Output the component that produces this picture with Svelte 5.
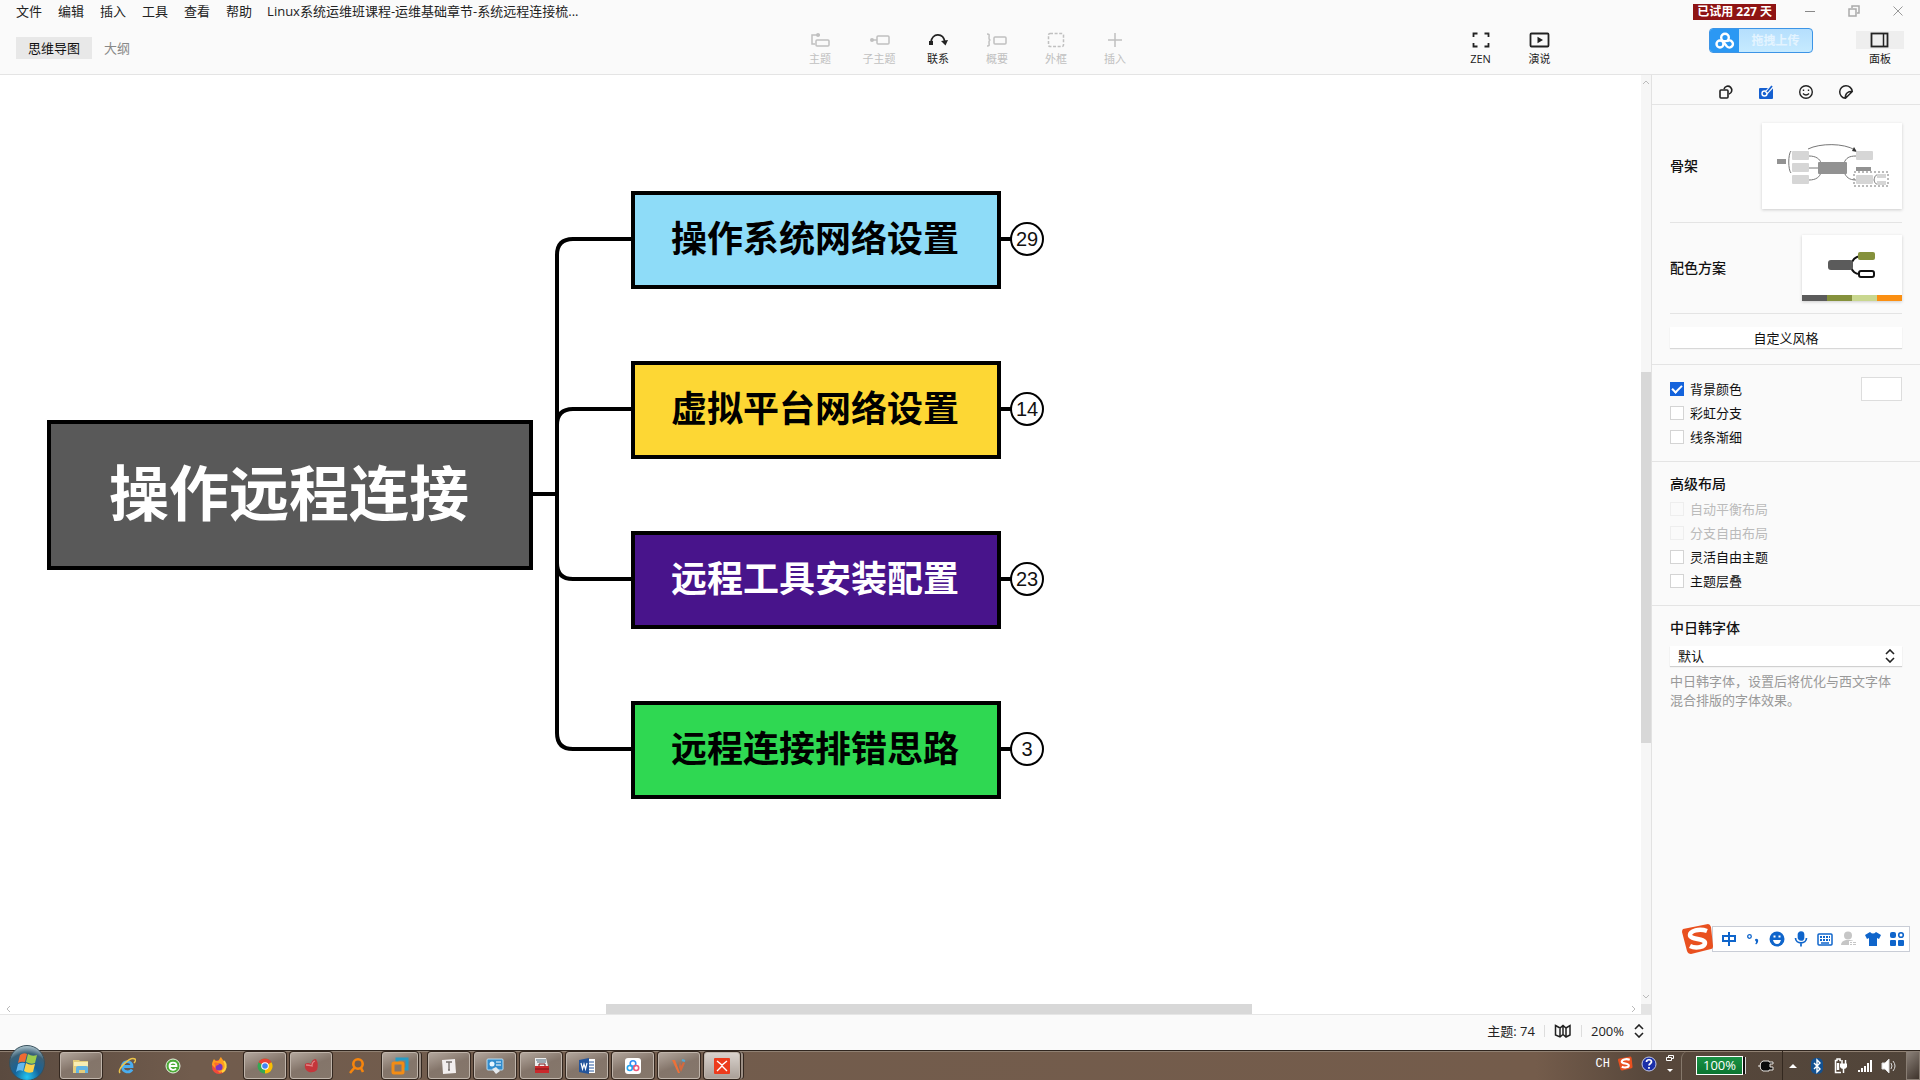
<script>
  const menus = ['文件', '编辑', '插入', '工具', '查看', '帮助'];
  const tools = [
    { id: 'topic', label: '主题' },
    { id: 'sub', label: '子主题' },
    { id: 'link', label: '联系', active: true },
    { id: 'summary', label: '概要' },
    { id: 'frame', label: '外框' },
    { id: 'plus', label: '插入' }
  ];
  const branches = [
    { text: '操作系统网络设置', count: 29, kind: 'sky' },
    { text: '虚拟平台网络设置', count: 14, kind: 'gold' },
    { text: '远程工具安装配置', count: 23, kind: 'violet' },
    { text: '远程连接排错思路', count: 3, kind: 'green' }
  ];
  const styleOptions = [
    { label: '背景颜色', checked: true },
    { label: '彩虹分支' },
    { label: '线条渐细' }
  ];
  const layoutOptions = [
    { label: '自动平衡布局', disabled: true },
    { label: '分支自由布局', disabled: true },
    { label: '灵活自由主题' },
    { label: '主题层叠' }
  ];
  const tasks = [
    { id: 'folder', name: '资源管理器', open: true },
    { id: 'ie', name: 'Internet Explorer' },
    { id: 'greene', name: '浏览器' },
    { id: 'firefox', name: 'Firefox' },
    { id: 'chrome', name: 'Chrome', open: true },
    { id: 'redball', name: '远程', open: true },
    { id: 'search', name: '搜索' },
    { id: 'vmware', name: 'VMware', open: true, stack: true },
    { id: 'typora', name: 'Typora', open: true },
    { id: 'control', name: '控制面板', open: true },
    { id: 'toolbox', name: '工具箱', open: true },
    { id: 'word', name: 'Word', open: true },
    { id: 'netdisk', name: '网盘', open: true },
    { id: 'vlogo', name: 'V', open: true },
    { id: 'xmind', name: 'XMind', open: true, stack: true, current: true }
  ];
</script>

{#snippet toolIcon(id)}
  <svg width="22" height="18" viewBox="0 0 22 18" fill="none" stroke="currentColor" stroke-width="1.5">
    {#if id === 'topic'}
      <path d="M6 13H3V4H8" /><circle cx="9" cy="4" r="2" fill="currentColor" stroke="none" /><path d="M8 4h3" />
      <rect x="7" y="9" width="13" height="6" rx="1" />
    {:else if id === 'sub'}
      <circle cx="4" cy="9" r="2" fill="currentColor" stroke="none" /><path d="M4 9h5" />
      <rect x="9" y="5" width="12" height="8" rx="1" />
    {:else if id === 'link'}
      <path d="M4 11C5 2 16 1 18 11" stroke-width="1.8" />
      <rect x="2" y="10" width="4" height="4" fill="currentColor" stroke="none" />
      <path d="M14 10l7-1-2.500 5.500z" fill="currentColor" stroke="none" />
    {:else if id === 'summary'}
      <path d="M1 3c3 0 2 1 2 4q0 2 1.500 2Q3 9 3 11c0 3 1 4-2 4" />
      <rect x="8" y="6" width="12" height="7" rx="1" />
    {:else if id === 'frame'}
      <rect x="3.500" y="2.500" width="15" height="13" rx="1.500" stroke-dasharray="3 1.600" />
    {:else if id === 'plus'}
      <path d="M11 2v14M4 9h14" />
    {:else if id === 'zen'}
      <path d="M3.500 6V2.500H7.500M14.500 2.500h4V6M18.500 12v3.500h-4M7.500 15.500h-4V12" stroke-width="1.800" />
    {:else if id === 'play'}
      <rect x="1.500" y="2.500" width="18" height="13" rx="1" stroke-width="1.800" />
      <path d="M8.500 5.800l5.500 3.200-5.500 3.200z" fill="currentColor" stroke="none" />
    {:else if id === 'panel'}
      <rect x="2.500" y="2.500" width="16" height="13" stroke-width="1.800" /><path d="M14.500 2.500v13" />
    {/if}
  </svg>
{/snippet}

{#snippet stepper()}
  <svg class="stepper" width="10" height="14" viewBox="0 0 10 14" fill="none" stroke="#222" stroke-width="1.6"><path d="M1 5l4-4 4 4M1 9l4 4 4-4" /></svg>
{/snippet}

{#snippet option(o)}
  <label class="opt" class:off={o.disabled}>
    <input type="checkbox" checked={o.checked} disabled={o.disabled} />
    <span>{o.label}</span>
  </label>
{/snippet}

{#snippet sogou(size)}
  <svg width={size} height={size} viewBox="0 0 32 32">
    <path d="M1 6L26 1q2 0 3 3l2 19q0 3-2 3L9 31q-3 0-4-3L0 9q0-2 1-3z" fill="#e9501f" />
    <path d="M25 8C17 5 8 8 8 12c0 5 15 3 15 8 0 4-9 6-15 3" fill="none" stroke="#fff" stroke-width="4.500" />
  </svg>
{/snippet}

{#snippet taskIcon(id)}
  <svg width="18" height="18" viewBox="0 0 18 18">
    {#if id === 'folder'}
      <path d="M1 3h6l1 1h8v12H1z" fill="#e3cd7c" /><path d="M2 5h14v4H2z" fill="#f8edb3" />
      <path d="M4 16v-5q0-2 2-2h8q2 0 2 2v5h-3v-3H7v3z" fill="#62b5e4" />
    {:else if id === 'ie'}
      <path d="M14 12.500C12 16 4.500 16 4.500 9.500 4.500 3 14 3 14 9.500H5" fill="none" stroke="#49adf0" stroke-width="2.800" />
      <path d="M2 16C-1 12 12-1 17 2c1 1 0 3-1 4" fill="none" stroke="#edc64a" stroke-width="1.500" />
    {:else if id === 'greene'}
      <circle cx="9" cy="9" r="7" fill="#4cab37" stroke="#e9f5e4" />
      <path d="M12 11.500c-2 2.500-6.500 1.500-6.500-2.500 0-4.500 7-4.500 7 0H6" fill="none" stroke="#fff" stroke-width="1.800" />
    {:else if id === 'firefox'}
      <circle cx="9" cy="10" r="7" fill="#f3493b" /><path d="M2 8c0-3 1-4 2-6 1 2 4 3 5 1 1-2 1-2 2-3 1 3 6 5 5 10-1 3-3 5-6 6" fill="#ff9d1e" />
      <circle cx="9" cy="10" r="3.600" fill="#7b35c1" /><path d="M4 6c3-1 4 0 5 2-3 0-3 1-3 3z" fill="#ff6b2c" />
      <path d="M14 4c3 4 2 9-2 11" fill="none" stroke="#ffd43c" stroke-width="2" />
    {:else if id === 'chrome'}
      <circle cx="9" cy="9" r="7.500" fill="#35a853" /><path d="M9 9L2.500 5.200A7.500 7.500 0 0 1 15.500 5.200z" fill="#e94235" />
      <path d="M9 9l6.500-3.800A7.500 7.500 0 0 1 9 16.500z" fill="#fbbc05" />
      <circle cx="9" cy="9" r="3.800" fill="#fff" /><circle cx="9" cy="9" r="2.800" fill="#4285f4" />
    {:else if id === 'redball'}
      <path d="M3 7q3-2 6 0 1-5 5-5 3 5 1 11-3 3-8 2-5-2-4-8z" fill="#c5363b" /><path d="M4 8q3 0 6 1 0-4 3-5" fill="none" stroke="#e28484" stroke-width="1.300" />
    {:else if id === 'search'}
      <circle cx="10" cy="7" r="4.700" fill="none" stroke="#f7850c" stroke-width="2.600" /><path d="M7 10l-5 6M13 11l2 4" stroke="#f7850c" stroke-width="2.600" />
    {:else if id === 'vmware'}
      <path d="M6 6V2h10v10h-3" fill="none" stroke="#279bc5" stroke-width="3" /><rect x="2" y="6" width="10" height="10" rx="1" fill="none" stroke="#f28c15" stroke-width="3" />
    {:else if id === 'typora'}
      <path d="M2 3l13-1 1 14-13 1z" fill="#f2eeee" /><path d="M6 5h6M9 5v8M8 13h2" stroke="#77706d" stroke-width="1.400" />
    {:else if id === 'control'}
      <rect x="1" y="2" width="16" height="11" rx="1" fill="#318ccd" stroke="#b8def4" /><circle cx="6" cy="7" r="2.500" fill="#e6f5ff" /><path d="M10 5h5M10 8h5" stroke="#fff" /><path d="M6 12l4-2 4 4-4 3z" fill="#e4e9ed" />
    {:else if id === 'toolbox'}
      <path d="M3 1h11l2 8H3z" fill="#eee" /><path d="M4 3h10M5 5h9" stroke="#4b6577" /><path d="M3 9h14v7H3z" fill="#c9292c" /><path d="M7 9V7h6v2M3 12h14" fill="none" stroke="#761619" />
    {:else if id === 'word'}
      <path d="M9 2h8v14H9z" fill="#fff" /><path d="M10 5h6M10 8h6M10 11h6M10 14h6" stroke="#2858a0" /><path d="M1 3l10-2v16L1 15z" fill="#24559c" /><path d="M3 6l1.500 6L6 7l1.500 5L9 6" fill="none" stroke="#fff" stroke-width="1.200" />
    {:else if id === 'netdisk'}
      <rect x="1" y="1" width="16" height="16" rx="3" fill="#fff" /><g fill="none" stroke-width="1.600"><circle cx="9" cy="6.500" r="2.800" stroke="#2f8df4" /><circle cx="5.800" cy="11" r="2.500" stroke="#26a5ef" /><circle cx="12.200" cy="11" r="2.500" stroke="#ed5879" /></g>
    {:else if id === 'vlogo'}
      <path d="M2 3h3l5 13H8z" fill="#ed7139" /><path d="M10 4l-1 6 2 5 4-9-2-1-2 4z" fill="#d26a40" /><path d="M12 3l3 1" stroke="#4ca9d8" stroke-width="2" />
    {:else if id === 'xmind'}
      <rect x="1" y="1" width="16" height="16" rx="1" fill="#ed3b1b" /><path d="M4 4l5 4 5-4M4 14l5-5 5 5" fill="none" stroke="#fff" stroke-width="1.400" />
    {/if}
  </svg>
{/snippet}

<div class="screen">
  <header>
    <div class="titlebar">
      <nav aria-label="菜单">
        {#each menus as m}<button class="menu">{m}</button>{/each}
      </nav>
      <span class="title">Linux系统运维班课程-运维基础章节-系统远程连接梳...</span>
      <span class="trial">已试用 227 天</span>
      <div class="win">
        <button aria-label="最小化"><svg width="12" height="12" stroke="#888" fill="none"><path d="M1 6.500h10" /></svg></button>
        <button aria-label="还原"><svg width="12" height="12" stroke="#aaa" fill="none" stroke-width="1.5"><rect x="1" y="4" width="7" height="7" /><path d="M4 3V1h7v7H9" /></svg></button>
        <button aria-label="关闭"><svg width="12" height="12" stroke="#999" fill="none"><path d="M1.500 1.500l9 9M10.500 1.500l-9 9" /></svg></button>
      </div>
    </div>
    <div class="toolbar">
      <div class="views">
        <button class="view on">思维导图</button>
        <button class="view">大纲</button>
      </div>
      <div class="tools">
        {#each tools as t}
          <button class="tool" class:dim={!t.active} disabled={!t.active}>{@render toolIcon(t.id)}<span>{t.label}</span></button>
        {/each}
      </div>
      <div class="actions">
        <button class="tool">{@render toolIcon('zen')}<span>ZEN</span></button>
        <button class="tool">{@render toolIcon('play')}<span>演说</span></button>
        <button class="upload">
          <span class="cloud"><svg width="20" height="18" viewBox="0 0 20 18" fill="none" stroke="#fff" stroke-width="2.400"><circle cx="10" cy="5.500" r="3.800" /><circle cx="5" cy="12" r="3.500" /><path d="M12 9.500a3.500 3.500 0 1 1 0 5L8 9.500" /></svg></span>
          <span class="uptext">拖拽上传</span>
        </button>
        <button class="tool panelbtn"><span class="pad">{@render toolIcon('panel')}</span><span>面板</span></button>
      </div>
    </div>
  </header>

  <div class="body">
    <div class="work">
      <div class="editor">
        <main class="canvas">
          <svg class="wires" width="1040" height="760" fill="none" stroke="#000" stroke-width="4">
            <path d="M533 419H557" />
            <path d="M631 164H573Q557 164 557 180V658Q557 674 573 674H631" />
            <path d="M631 334H573Q557 334 557 350M631 504H573Q557 504 557 488" />
            <path d="M1001 164h11M1001 334h11M1001 504h11M1001 674h11" />
          </svg>
          <div class="root">操作远程连接</div>
          <div class="branches">
            {#each branches as b}
              <div class="branch">
                <div class="node {b.kind}">{b.text}</div>
                <button class="count">{b.count}</button>
              </div>
            {/each}
          </div>
        </main>
        <div class="vbar">
          <svg width="10" height="10" fill="none" stroke="#bbb"><path d="M2 7l3-3 3 3" /></svg>
          <div class="vtrack"><i></i></div>
          <svg width="10" height="10" fill="none" stroke="#bbb"><path d="M2 3l3 3 3-3" /></svg>
        </div>
      </div>
      <div class="hbar">
        <svg width="16" height="10" fill="none" stroke="#bbb"><path d="M10 2L7 5l3 3" /></svg>
        <div class="htrack"><i></i></div>
        <svg width="16" height="10" fill="none" stroke="#bbb"><path d="M7 2l3 3-3 3" /></svg>
        <b></b>
      </div>
      <footer class="status">
        <span>主题: 74</span><hr />
        <button aria-label="导航图"><svg width="18" height="14" viewBox="0 0 18 14" fill="none" stroke="#222" stroke-width="1.500"><path d="M1.500 1.500L6 4l3-2.500L12 4l4-2.500V11l-4 2-3-2.500L6 13l-4.500-2zM6 4v9M12 4v9M9 1.500V10" /></svg></button><hr />
        <button class="zoom">200% {@render stepper()}</button>
      </footer>
    </div>

    <aside>
      <div class="ptabs">
        <button aria-label="样式"><svg width="16" height="16" viewBox="0 0 16 16" fill="none" stroke="#222" stroke-width="1.600"><rect x="2" y="6" width="8" height="8" rx="1" /><path d="M6 5a4 4 0 1 1 5 5" /></svg></button>
        <button aria-label="画布"><svg width="16" height="16" viewBox="0 0 16 16"><rect x="1" y="4" width="14" height="11" rx="1" fill="#1660d0" /><circle cx="6.500" cy="9.500" r="2.500" fill="none" stroke="#fff" stroke-width="1.400" /><path d="M8 9l6.500-7" stroke="#fafafa" stroke-width="4" /><path d="M9 8l5-6" stroke="#1660d0" stroke-width="1.800" /></svg></button>
        <button aria-label="标记"><svg width="16" height="16" viewBox="0 0 16 16" fill="none" stroke="#222" stroke-width="1.400"><circle cx="8" cy="8" r="6.300" /><path d="M5 9.500q3 3 6 0M5.500 5.500v1.500M10.500 5.500v1.500" /></svg></button>
        <button aria-label="贴纸"><svg width="16" height="16" viewBox="0 0 16 16" fill="none" stroke="#222" stroke-width="1.500"><path d="M14.300 7.500A6.300 6.300 0 1 0 7.500 14.300zM14.300 7.500C11 7 6.500 9 7.500 14.300" /></svg></button>
      </div>
      <section class="themes">
        <div class="row">
          <h3>骨架</h3>
          <button class="thumb skeleton" aria-label="选择骨架">
            <svg width="140" height="86" viewBox="0 0 140 86" fill="none" stroke="#777">
              <path d="M46 26C58 20 82 20 93 27M47 33c7 0 11 3 12 7M47 45h10M47 57c7 0 11-3 12-8M94 33c-7 0-10 2-12 7M94 57c-7 0-10-3-12-8M29 28c-3 3-3 19 0 22M112 57c1-5 2-5 4-5M112 57c1 4 2 4 4 4" />
              <path d="M92 24l3 5-5-1z" fill="#333" stroke="none" />
              <g fill="#d6d6d6" stroke="none"><rect x="30" y="28" width="17" height="9" rx="1" /><rect x="30" y="40" width="17" height="9" rx="1" /><rect x="30" y="52" width="17" height="9" rx="1" /><rect x="94" y="28" width="17" height="9" rx="1" /><rect x="94" y="52" width="17" height="9" rx="1" /><rect x="115" y="51" width="9" height="4" /><rect x="115" y="58" width="9" height="4" /></g>
              <g fill="#929292" stroke="none"><rect x="56" y="39" width="29" height="12" rx="1" /><rect x="15" y="36" width="9" height="5" /><rect x="94" y="44" width="15" height="4" /></g>
              <rect x="92" y="49" width="34" height="14" stroke-dasharray="2 2" />
            </svg>
          </button>
        </div>
        <div class="row second">
          <h3>配色方案</h3>
          <button class="thumb palette" aria-label="选择配色方案">
            <svg width="100" height="60" viewBox="0 0 100 60" fill="none" stroke="#111" stroke-width="2"><path d="M48 31c3-7 5-9 10-10M48 31c3 6 5 8 10 8" /><rect x="26" y="25" width="25" height="10" rx="3" fill="#5b5b5b" stroke="none" /><rect x="56" y="17" width="17" height="8" rx="2" fill="#85913c" stroke="none" /><rect x="57" y="36" width="15" height="6" rx="2" fill="#fff" /></svg>
            <span class="bars"><i class="c1"></i><i class="c2"></i><i class="c3"></i><i class="c4"></i></span>
          </button>
        </div>
        <button class="custom">自定义风格</button>
      </section>
      <section class="opts">
        <div class="list">{#each styleOptions as o}{@render option(o)}{/each}</div>
        <input class="swatch" type="color" value="#ffffff" aria-label="背景颜色值" />
      </section>
      <section class="layout">
        <h3>高级布局</h3>
        <div class="list">{#each layoutOptions as o}{@render option(o)}{/each}</div>
      </section>
      <section class="fonts">
        <h3><label for="cjk">中日韩字体</label></h3>
        <div class="select"><select id="cjk"><option>默认</option></select>{@render stepper()}</div>
        <p>中日韩字体，设置后将优化与西文字体混合排版的字体效果。</p>
      </section>
    </aside>
  </div>

  <div class="taskbar">
    <button class="start" aria-label="开始">
      <svg width="38" height="36" viewBox="0 0 38 36">
        <defs><radialGradient id="orb" cx=".5" cy=".9" r=".9"><stop offset="0" stop-color="#24c6f2" /><stop offset=".4" stop-color="#15639a" /><stop offset=".75" stop-color="#3a6076" /><stop offset="1" stop-color="#b4cbd4" /></radialGradient></defs>
        <circle cx="19" cy="18" r="17.500" fill="url(#orb)" stroke="#38505c" />
        <path d="M12 10q4-3 7-1l-2 8q-4-1-7 1z" fill="#ef6a32" /><path d="M20 9q4 3 9 1l-2 8q-4 2-9-1z" fill="#9ccc4d" /><path d="M10 19q4-2 7-1l-2 8q-4-2-7 1z" fill="#64b7ed" /><path d="M18 18q4 3 9 1l-2 8q-5 2-9-1z" fill="#fbd24c" />
      </svg>
    </button>
    <div class="tasks">
      {#each tasks as t}
        <button class="task" class:open={t.open} class:stack={t.stack} class:current={t.current} aria-label={t.name}><span>{@render taskIcon(t.id)}</span></button>
      {/each}
    </div>
    <div class="lang">
      <span class="ch">CH</span>
      {@render sogou(15)}
      <svg width="16" height="16" viewBox="0 0 16 16"><circle cx="8" cy="8" r="7" fill="#1a2fa8" stroke="#c2c8e8" /><path d="M5.500 6c0-3 5-3 5 0 0 1.500-2.500 1.500-2.500 3.500M8 11v1.800" fill="none" stroke="#fff" stroke-width="1.700" /></svg>
      <svg width="10" height="20" viewBox="0 0 10 20" fill="none" stroke="#fff"><path d="M1.500 3.500h5v3h-5zM3.500 3V1.500h5v3H7" /><path d="M2 15h6l-3 3z" fill="#fff" stroke="none" /></svg>
    </div>
    <div class="power">
      <span class="battery">100%</span>
      <svg width="18" height="14" viewBox="0 0 18 14"><path d="M6 2h6v1h4v2h-3v3h3v3h-4v1H6Q3 11 3 7t3-5zM1 7h3" fill="#0a0a0a" stroke="#e8e4e0" /></svg>
    </div>
    <div class="tray">
      <svg width="16" height="18" viewBox="0 0 16 18"><path d="M4 11h8L8 7z" fill="#fff" /></svg>
      <svg width="16" height="18" viewBox="0 0 16 18"><rect x="2" y="1" width="12" height="16" rx="5" fill="#145190" /><path d="M5 6l6 6-3 3V3l3 3-6 6" fill="none" stroke="#fff" stroke-width="1.400" /></svg>
      <svg width="16" height="18" viewBox="0 0 16 18" fill="none" stroke="#fff" stroke-width="1.500"><path d="M8 15.500H2.500v-12H4V2h3v1.500h1" /><path d="M5 6v7" stroke-width="2.500" /><path d="M7 6.500h7V10q-1 2-3.500 2T7 10z" fill="#fff" stroke="none" /><path d="M9 7V3M12.500 7V3M10.500 11v5" /></svg>
      <svg width="16" height="18" viewBox="0 0 16 18" stroke="#fff" stroke-width="2"><path d="M2 15v-2M5 15v-4M8 15V9M11 15V6M14 15V3" /></svg>
      <svg width="16" height="18" viewBox="0 0 16 18" fill="none" stroke="#ddd"><path d="M1 6h3l4-4v14l-4-4H1z" fill="#fff" /><path d="M10 6q2 3 0 6M12 4q4 5 0 10" /></svg>
    </div>
    <button class="desk" aria-label="显示桌面"></button>
  </div>

  <div class="ime">
    <span class="logo">{@render sogou(32)}</span>
    <div class="imebar">
      <svg viewBox="0 0 16 16" fill="none" stroke="#0f65cb" stroke-width="2"><path d="M2 5h12v5H2zM8 1v14" /></svg>
      <svg viewBox="0 0 16 16"><circle cx="4.500" cy="5.500" r="1.800" fill="none" stroke="#0f65cb" stroke-width="1.300" /><path d="M10 8.500q1-1.500 3 0 .8 3-2 5l-.7-1q1.200-1 .7-2-1-.5-1-2z" fill="#0f65cb" /></svg>
      <svg viewBox="0 0 16 16"><circle cx="8" cy="8" r="7.500" fill="#0f65cb" /><path d="M4 9h8q-1 4-4 4T4 9zM4.500 4.500h2v2h-2zM9.500 4.500h2v2h-2z" fill="#fff" /></svg>
      <svg viewBox="0 0 16 16" fill="none" stroke="#0f65cb" stroke-width="1.700"><rect x="5.500" y="1" width="5" height="8" rx="2.500" fill="#0f65cb" /><path d="M2.500 7c0 6.500 11 6.500 11 0M8 12v3.500" /></svg>
      <svg viewBox="0 0 16 16"><rect x="1" y="3" width="14" height="11" rx="1" fill="none" stroke="#0f65cb" stroke-width="1.500" /><path d="M3 6h10M3 9h10" stroke="#0f65cb" stroke-width="2" stroke-dasharray="2 1" /><path d="M4 12h8" stroke="#0f65cb" stroke-width="1.500" /></svg>
      <svg viewBox="0 0 16 16" fill="#c6c6c6"><circle cx="7" cy="4.500" r="4" /><path d="M0 14q0-4 5-5h4q3 0 4 2v3z" /><path d="M8 10h8v5H8z" fill="#fff" /><path d="M9 11h2v1H9zM12 11h3v1h-3zM9 13h2v1H9zM12 13h3v1h-3z" /></svg>
      <svg viewBox="0 0 16 16"><path d="M5 1q3 3 6 0l5 3-2 4-2-1v8H4V7L2 8 0 4z" fill="#0f65cb" /></svg>
      <svg viewBox="0 0 16 16" fill="#0f65cb"><rect x="1" y="1" width="6" height="6" rx="2" /><rect x="1" y="9" width="6" height="6" rx="1" /><rect x="9" y="9" width="6" height="6" rx="1" /><circle cx="12" cy="4" r="2.300" fill="none" stroke="#0f65cb" stroke-width="1.600" /></svg>
    </div>
  </div>
</div>

<style>
  :global(body) { margin: 0; }
  .screen {
    position: relative; display: flex; flex-direction: column; min-height: 100vh; overflow: hidden;
    background: #fafafa; color: #222; font: 13px/18px "Open Sans", "Noto Sans CJK SC", sans-serif;
  }
  .screen *, .screen { box-sizing: border-box; }
  button { font: inherit; color: inherit; background: none; border: 0; padding: 0; margin: 0; }
  svg { display: block; flex: none; }
  h3 { margin: 0; font-size: 14px; line-height: 20px; font-weight: 500; color: #111; }

  header { border-bottom: 1px solid #e4e4e4; }
  .titlebar { display: flex; align-items: center; height: 24px; padding: 0 0 2px 16px; }
  nav { display: flex; gap: 16px; margin-right: 15px; }
  .title { flex: 1; white-space: nowrap; }
  .trial { background: #8f1414; color: #fff; font-weight: 700; font-size: 12px; line-height: 16px; margin-top: 2px; padding: 0 4px; margin-right: 12px; white-space: nowrap; }
  .win { display: flex; }
  .win button { display: flex; justify-content: center; width: 44px; }
  .toolbar { display: grid; grid-template-columns: 1fr auto 1fr; height: 50px; }
  .views { display: flex; gap: 12px; padding: 13px 16px; }
  .view { height: 22px; line-height: 20px; color: #888; white-space: nowrap; }
  .view.on { background: #e8e8e8; color: #111; padding: 0 12px; }
  .tools { display: flex; padding: 7px 0 0 15px; }
  .tool { display: flex; flex-direction: column; align-items: center; width: 59px; font-size: 11px; line-height: 16px; gap: 2px; color: #222; }
  .tool.dim { color: #c0c0c0; }
  .actions { display: flex; justify-content: flex-end; padding: 7px 16px 0 0; align-items: flex-start; }
  .upload { display: flex; width: 104px; height: 25px; margin: -3px 43px 0 140px; border: 1px solid #3c94e6; border-radius: 4px; overflow: hidden; background: linear-gradient(#b5dffd, #c6eaff); }
  .cloud { display: flex; align-items: center; justify-content: center; width: 29px; background: #2b98f3; align-self: stretch; }
  .uptext { flex: 1; line-height: 23px; font-size: 12px; color: #e4f4ff; font-weight: 700; }
  .panelbtn { width: 48px; }
  .pad { display: flex; justify-content: center; width: 48px; background: #eee; }

  .body { flex: 1; display: flex; }
  .work { flex: 1; display: flex; flex-direction: column; min-width: 0; }
  .editor { flex: 1; display: flex; background: #fff; }
  .canvas { position: relative; flex: 1; overflow: hidden; }
  .wires { position: absolute; left: 0; top: 0; }
  .root { position: absolute; left: 47px; top: 345px; width: 486px; height: 150px; border: 4px solid #000; background: #595959; color: #fff; font-size: 60px; font-weight: 700; line-height: 138px; padding-right: 2px; text-align: center; white-space: nowrap; }
  .branches { position: absolute; left: 631px; top: 116px; display: flex; flex-direction: column; gap: 72px; }
  .branch { display: flex; align-items: center; gap: 9px; }
  .node { width: 370px; height: 98px; border: 4px solid #000; color: #000; font-size: 36px; font-weight: 700; line-height: 88px; padding-right: 2px; text-align: center; white-space: nowrap; }
  .sky { background: #8edcf8; }
  .gold { background: #fdd734; }
  .violet { background: #48148b; color: #fff; }
  .green { background: #2fd852; }
  .count { width: 34px; height: 34px; margin-bottom: 2px; border: 2px solid #000; border-radius: 50%; background: #fff; color: #111; font: 20px/30px "Liberation Sans", sans-serif; text-align: center; }
  .vbar { display: flex; flex-direction: column; width: 10px; background: #f6f6f6; padding: 2px 0; }
  .vtrack { flex: 1; display: flex; flex-direction: column; }
  .vtrack::before { content: ""; flex: 285; }
  .vtrack i { flex: 371; background: #d8d8d8; }
  .vtrack::after { content: ""; flex: 249; }
  .hbar { display: flex; height: 10px; background: #fff; }
  .htrack { flex: 1; display: flex; }
  .htrack::before { content: ""; flex: 590; }
  .htrack i { flex: 646; background: #d8d8d8; }
  .htrack::after { content: ""; flex: 373; }
  .hbar b { width: 10px; background: #e4e4e4; }
  .status { display: flex; align-items: center; justify-content: flex-end; height: 36px; border-top: 1px solid #e6e6e6; padding: 0 7px 4px 0; gap: 9px; }
  .status hr { width: 1px; height: 12px; margin: 0; border: 0; background: #ddd; }
  .zoom { display: flex; align-items: center; gap: 10px; }

  aside { width: 269px; border-left: 1px solid #e2e2e2; }
  .ptabs { display: flex; justify-content: center; gap: 24px; padding: 9px 0 4px; height: 30px; border-bottom: 1px solid #e4e4e4; }
  section { padding: 0 18px; border-bottom: 1px solid #e4e4e4; }
  .themes { height: 260px; display: flex; flex-direction: column; }
  .row { display: flex; align-items: center; justify-content: space-between; height: 118px; padding-top: 5px; border-bottom: 1px solid #e4e4e4; }
  .second { height: 91px; padding: 0; }
  .thumb { display: flex; flex-direction: column; background: #fff; box-shadow: 0 1px 3px #ccc; }
  .skeleton { width: 140px; height: 86px; }
  .palette { width: 100px; height: 66px; }
  .bars { display: flex; align-self: stretch; height: 6px; }
  .bars i { flex: 1; }
  .c1 { background: #5b5b5b; }
  .c2 { background: #85913c; }
  .c3 { background: #c9d78f; }
  .c4 { background: #fb8f12; }
  .custom { height: 21px; margin-top: 13px; background: #fff; box-shadow: 0 1px 1px #d8d8d8; text-align: center; color: #111; }
  .opts { display: flex; justify-content: space-between; align-items: flex-start; padding-top: 12px; height: 97px; }
  .list { display: flex; flex-direction: column; }
  .opt { display: flex; align-items: center; gap: 6px; height: 24px; color: #111; }
  .opt.off { color: #bbb; }
  .opt input { appearance: none; width: 14px; height: 14px; margin: 0; border: 1px solid #d4d4d4; background: #fff; display: grid; place-items: center; }
  .opt.off input { border-color: #eee; background: #fafafa; }
  .opt input:checked { background: #1463dc; border-color: #1463dc; }
  .opt input:checked::after { content: ""; width: 4px; height: 8px; margin-bottom: 2px; border: solid #fff; border-width: 0 2px 2px 0; transform: rotate(45deg); }
  .swatch { appearance: none; width: 41px; height: 24px; padding: 0; border: 1px solid #ddd; background: #fff; }
  .swatch::-webkit-color-swatch-wrapper { padding: 0; }
  .swatch::-webkit-color-swatch { border: 0; }
  .layout { height: 144px; padding-top: 12px; }
  .layout .list { padding-top: 3px; }
  .fonts { padding-top: 12px; border: 0; }
  .select { display: flex; align-items: center; height: 20px; margin-top: 8px; padding: 0 7px 0 8px; background: #fff; box-shadow: 0 1px 1px #d0d0d0; }
  .select select { appearance: none; flex: 1; border: 0; background: none; padding: 0; font: inherit; color: #111; }
  .fonts p { margin: 6px 0 0; line-height: 19px; color: #999; }

  .taskbar { display: flex; height: 30px; border-top: 1px solid #30261f; box-shadow: inset 0 1px #8f8072; background: linear-gradient(90deg, #5a4a3f, #715c4d 10%, #745c4b 80%, #57473b 86%, #51453a); color: #fff; }
  .start { width: 58px; padding-left: 8px; margin-top: -6px; height: 35px; }
  .tasks { display: flex; flex: 1; }
  .task { display: flex; width: 46px; padding: 1px 2px; }
  .task span { display: flex; flex: 1; align-items: center; justify-content: center; border: 1px solid transparent; border-radius: 3px; }
  .task.open span { border-color: #c0b5ab; box-shadow: 0 0 0 1px #33271f; background: linear-gradient(160deg, #b3a79d, #84756a 50%, #85776b); }
  .task.current span { background: linear-gradient(#d9d2cc, #aaa098); }
  .task.stack span { box-shadow: 0 0 0 1px #33271f, 3px 0 #9c8f85, 4px 0 #33271f; }
  .task.stack { padding-right: 8px; }
  .lang { display: flex; align-items: center; gap: 8px; margin-right: 6px; padding-bottom: 4px; }
  .ch { font: 12px/16px "Liberation Mono", monospace; }
  .power { display: flex; align-items: center; gap: 14px; padding: 0 7px 0 14px; border-left: 1px solid #85786b; border-right: 1px solid #33281f; border-radius: 8px 0 0; }
  .battery { width: 47px; height: 19px; border: 1px solid #fff; background: linear-gradient(#199245, #0b7430); text-align: center; line-height: 16px; box-shadow: 3px 0 0 -1px #111, 4px 0 0 -1px #ddd; }
  .tray { display: flex; align-items: center; gap: 8px; padding: 0 9px 0 2px; }
  .desk { width: 14px; border: 1px solid #887d73; background: linear-gradient(135deg, #8c827a, #3e332b); }

  .ime { position: absolute; right: 10px; bottom: 125px; display: flex; align-items: center; }
  .logo { margin-right: -2px; z-index: 1; }
  .imebar { display: flex; align-items: center; gap: 8px; height: 26px; padding: 0 4px 0 8px; background: #fff; border: 1px solid #c9cdd6; }
  .imebar svg { width: 16px; height: 16px; }
</style>
